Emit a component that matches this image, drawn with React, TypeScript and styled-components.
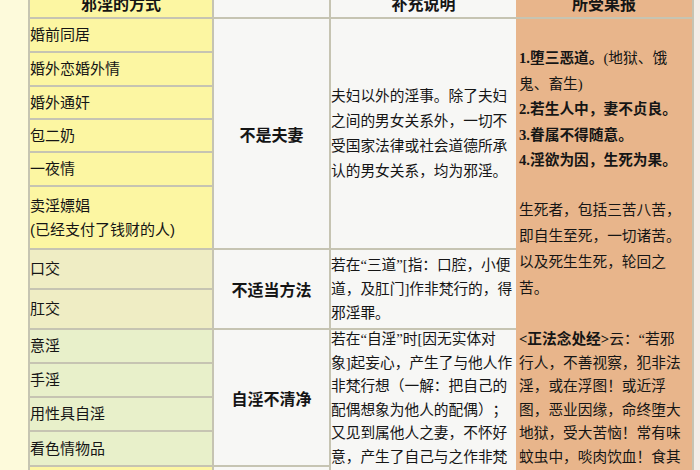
import React from "react";
import styled, { createGlobalStyle } from "styled-components";

const Global = createGlobalStyle`
  html, body { margin: 0; padding: 0; background: #fdfadb; }
  body {
    width: 700px;
    height: 470px;
    overflow: hidden;
    font-family: "Liberation Sans", "Noto Sans CJK SC", sans-serif;
    color: #151515;
    text-spacing-trim: space-all;
  }
`;

const Page = styled.div`
  padding-left: 28px;
  height: 470px;
  overflow: hidden;
`;

const Table = styled.div`
  display: grid;
  grid-template-columns: 182px 115px 185px 174px;
  grid-template-rows: 28px 32px 32px 31px 31px 32px 61px 38px 38px 32px 32px 32px 33px 33px;
  gap: 2px;
  padding: 2px;
  width: max-content;
  margin-top: -13px;
  background: #c6c4b2;
  border-right: 8px solid #f4eee8;
`;

const tones: Record<string, string> = {
  yellow: "#fcf6a2",
  olive: "#efedc4",
  green: "#e8f0ca",
  white: "#f7f7f5",
  orange: "#e8b58b",
};

const HeadCell = styled.div<{ $col: number; $tone: string; $bleed?: boolean }>`
  grid-row: 1;
  grid-column: ${(p) => p.$col};
  background: ${(p) => tones[p.$tone]};
  display: flex;
  align-items: center;
  justify-content: center;
  font-size: 16px;
  font-weight: 700;
  margin-left: ${(p) => (p.$bleed ? "-2px" : "0")};
`;

const KindCell = styled.div<{ $row: number; $tone: string }>`
  grid-row: ${(p) => p.$row};
  grid-column: 1;
  background: ${(p) => tones[p.$tone]};
  display: flex;
  flex-direction: column;
  justify-content: center;
  font-size: 15px;
  line-height: 24px;
  white-space: nowrap;
`;

const GroupCell = styled.div<{ $row: number; $span: number }>`
  grid-row: ${(p) => p.$row} / span ${(p) => p.$span};
  grid-column: 2;
  background: ${tones.white};
  display: flex;
  align-items: center;
  justify-content: center;
  font-size: 16px;
  font-weight: 700;
`;

const NoteCell = styled.div<{ $row: number; $span: number; $top?: boolean; $lh: number }>`
  grid-row: ${(p) => p.$row} / span ${(p) => p.$span};
  grid-column: 3;
  background: ${tones.white};
  display: flex;
  flex-direction: column;
  justify-content: ${(p) => (p.$top ? "flex-start" : "center")};
  font-family: "Liberation Serif", "Noto Sans CJK SC", serif;
  font-size: 14.7px;
  line-height: ${(p) => p.$lh}px;
  white-space: nowrap;
  overflow: hidden;
`;

const NoteText = styled.div<{ $shift?: number }>`
  margin-top: ${(p) => p.$shift ?? 0}px;
`;

const FruitCell = styled.div`
  grid-row: 2 / span 13;
  grid-column: 4;
  margin-left: -2px;
  background: ${tones.orange};
  padding: 27px 0 0 3px;
  font-family: "Liberation Serif", "Noto Sans CJK SC", serif;
  font-size: 14.7px;
  white-space: nowrap;
  overflow: hidden;
`;

const FruitBlock = styled.div<{ $lh: number; $mt: number }>`
  line-height: ${(p) => p.$lh}px;
  margin-top: ${(p) => p.$mt}px;
`;

const Strong = styled.b`
  font-weight: 700;
`;

const kinds: { row: number; tone: string; lines: string[] }[] = [
  { row: 2, tone: "yellow", lines: ["婚前同居"] },
  { row: 3, tone: "yellow", lines: ["婚外恋婚外情"] },
  { row: 4, tone: "yellow", lines: ["婚外通奸"] },
  { row: 5, tone: "yellow", lines: ["包二奶"] },
  { row: 6, tone: "yellow", lines: ["一夜情"] },
  { row: 7, tone: "yellow", lines: ["卖淫嫖娼", "(已经支付了钱财的人)"] },
  { row: 8, tone: "olive", lines: ["口交"] },
  { row: 9, tone: "olive", lines: ["肛交"] },
  { row: 10, tone: "green", lines: ["意淫"] },
  { row: 11, tone: "green", lines: ["手淫"] },
  { row: 12, tone: "green", lines: ["用性具自淫"] },
  { row: 13, tone: "green", lines: ["看色情物品"] },
  { row: 14, tone: "yellow", lines: [] },
];

const lines = (arr: string[]) =>
  arr.map((l, i) => <div key={i}>{l}</div>);

export default function App() {
  return (
    <>
      <Global />
      <Page>
        <Table>
          <HeadCell $col={1} $tone="yellow">邪淫的方式</HeadCell>
          <HeadCell $col={2} $tone="white" />
          <HeadCell $col={3} $tone="white">补充说明</HeadCell>
          <HeadCell $col={4} $tone="orange" $bleed>所受果报</HeadCell>

          {kinds.map((k) => (
            <KindCell key={k.row} $row={k.row} $tone={k.tone}>
              {lines(k.lines)}
            </KindCell>
          ))}

          <GroupCell $row={2} $span={6}>不是夫妻</GroupCell>
          <GroupCell $row={8} $span={2}>不适当方法</GroupCell>
          <GroupCell $row={10} $span={4}>自淫不清净</GroupCell>
          <GroupCell $row={14} $span={1} />

          <NoteCell $row={2} $span={6} $lh={25}>
            {lines([
              "夫妇以外的淫事。除了夫妇",
              "之间的男女关系外，一切不",
              "受国家法律或社会道德所承",
              "认的男女关系，均为邪淫。",
            ])}
          </NoteCell>
          <NoteCell $row={8} $span={2} $lh={24}>
            {lines([
              "若在“三道”[指：口腔，小便",
              "道，及肛门]作非梵行的，得",
              "邪淫罪。",
            ])}
          </NoteCell>
          <NoteCell $row={10} $span={5} $lh={23.5} $top>
            <NoteText $shift={-2}>
              {lines([
                "若在“自淫”时[因无实体对",
                "象]起妄心，产生了与他人作",
                "非梵行想（一解：把自己的",
                "配偶想象为他人的配偶）；",
                "又见到属他人之妻，不怀好",
                "意，产生了自己与之作非梵",
              ])}
            </NoteText>
          </NoteCell>

          <FruitCell>
            <FruitBlock $lh={25.5} $mt={0}>
              <div>
                <Strong>1.堕三恶道。</Strong>(地狱、饿
              </div>
              <div>鬼、畜生)</div>
              <div><Strong>2.若生人中，妻不贞良。</Strong></div>
              <div><Strong>3.眷属不得随意。</Strong></div>
              <div><Strong>4.淫欲为因，生死为果。</Strong></div>
            </FruitBlock>
            <FruitBlock $lh={26} $mt={23.5}>
              <div>生死者，包括三苦八苦，</div>
              <div>即自生至死，一切诸苦。</div>
              <div>以及死生生死，轮回之</div>
              <div>苦。</div>
            </FruitBlock>
            <FruitBlock $lh={23.5} $mt={27}>
              <div>
                <Strong>&lt;正法念处经&gt;</Strong>云：“若邪
              </div>
              <div>行人，不善视察，犯非法</div>
              <div>淫，或在浮图！或近浮</div>
              <div>图，恶业因缘，命终堕大</div>
              <div>地狱，受大苦恼！常有味</div>
              <div>蚊虫中，啖肉饮血！食其</div>
            </FruitBlock>
          </FruitCell>
        </Table>
      </Page>
    </>
  );
}
